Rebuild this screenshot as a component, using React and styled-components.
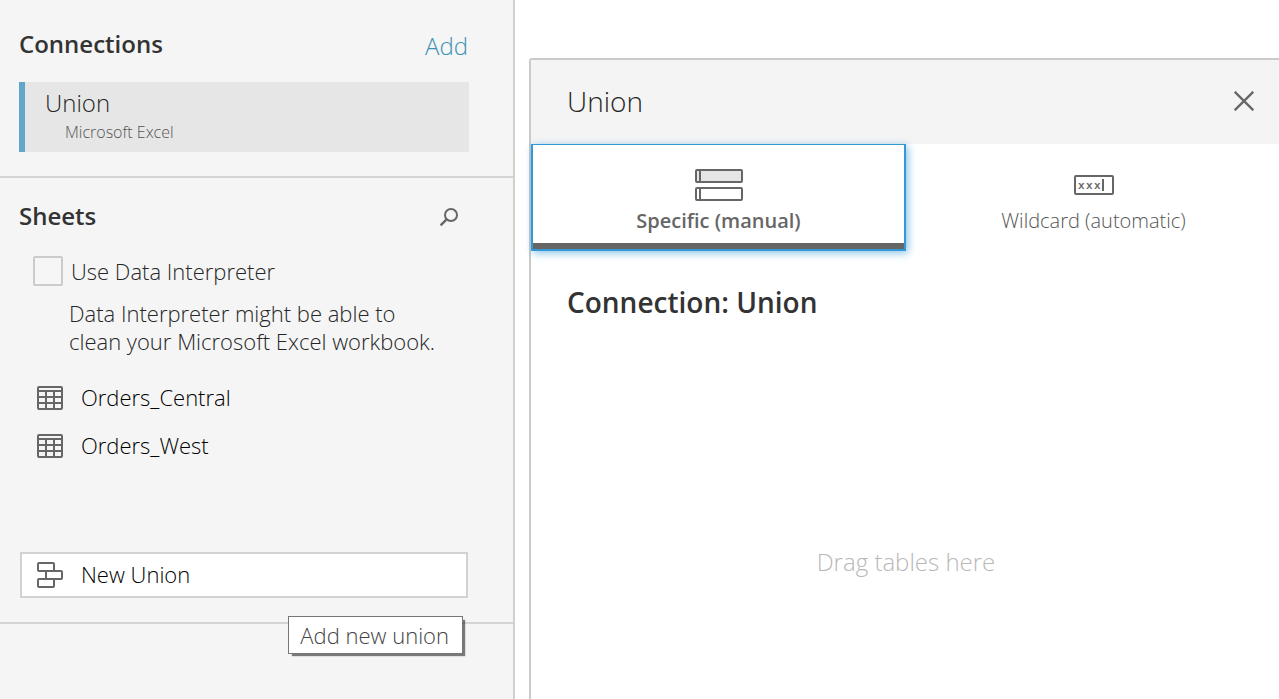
import React from "react";
import styled, { createGlobalStyle } from "styled-components";

const GlobalStyle = createGlobalStyle`
  *, *::before, *::after { box-sizing: border-box; }
  html, body, #root { height: 100%; }
  body {
    margin: 0;
    background: #fff;
    color: #262626;
    font-family: "Open Sans", "Noto Sans", sans-serif;
    font-weight: 300;
  }
  h1, h2, h3, p, ul { margin: 0; padding: 0; }
  button {
    font: inherit;
    color: inherit;
    border: 0;
    padding: 0;
    background: none;
    cursor: pointer;
  }
`;

const Page = styled.div`
  display: flex;
  gap: 14px;
  min-height: 100%;
  overflow-x: hidden;
`;

const Sidebar = styled.aside`
  flex: 0 0 515px;
  background: #f5f5f5;
  border-right: 2px solid #d0d0d0;
`;

const Section = styled.section`
  padding: ${(p) => p.$top}px 44px 24px 19px;
  border-bottom: 2px solid #d4d4d4;
`;

const SectionHeader = styled.div`
  display: flex;
  align-items: center;
  justify-content: space-between;
  height: 32px;
`;

const SectionTitle = styled.h2`
  font-size: 24px;
  line-height: 32px;
  font-weight: 600;
  color: #333;
`;

const AddLink = styled.a`
  font-size: 24px;
  line-height: 32px;
  padding: 4px 1px 0 0;
  color: #3c93b3;
  text-decoration: none;
`;

const SearchButton = styled.button`
  display: flex;
  padding-top: 2px;
  margin-right: 10px;
`;

const ConnectionCard = styled.button`
  && {
    display: block;
    width: 100%;
    height: 70px;
    margin-top: 22px;
    padding: 0 0 4px 20px;
    text-align: left;
    background: #e6e6e6;
    border-left: 6px solid #63a6c9;
  }
`;

const ConnectionName = styled.span`
  display: block;
  font-size: 24px;
  line-height: 34px;
`;

const ConnectionType = styled.span`
  display: block;
  padding-left: 20px;
  font-size: 16px;
  line-height: 24px;
  color: #555;
`;

const InterpreterLabel = styled.label`
  display: flex;
  align-items: center;
  gap: 8px;
  margin: 24px 0 0 14px;
  font-size: 22px;
  line-height: 30px;
`;

const Checkbox = styled.input`
  appearance: none;
  flex: none;
  width: 30px;
  height: 30px;
  margin: 0;
  background: #f6f6f6;
  border: 2px solid #cbcbcb;
  border-radius: 2px;
`;

const Hint = styled.p`
  width: 384px;
  max-width: 100%;
  margin: 13px 0 0 50px;
  font-size: 22px;
  line-height: 28px;
`;

const SheetList = styled.ul`
  margin: 19px 0 82px;
  list-style: none;
`;

const itemLayout = `
  display: flex;
  align-items: center;
  gap: 18px;
  width: 100%;
  font-size: 22px;
  color: #000;
  text-align: left;
`;

const ItemText = styled.span`
  line-height: 30px;
  padding-bottom: 2px;
`;

const SheetButton = styled.button`
  && {
    ${itemLayout}
    height: 48px;
    padding-left: 18px;
  }
`;

const NewUnionArea = styled.div`
  position: relative;
  padding: 0 1px;
`;

const NewUnionButton = styled.button`
  && {
    ${itemLayout}
    height: 46px;
    padding-left: 15px;
    background: #fff;
    border: 2px solid #d2d2d2;
  }
`;

const Tooltip = styled.div`
  position: absolute;
  top: 64px;
  right: 6px;
  height: 38px;
  padding: 0 13px 0 11px;
  font-size: 22px;
  line-height: 36px;
  white-space: nowrap;
  color: #444;
  background: #fff;
  border: 1px solid #767676;
  box-shadow: 3px 3px 1px -1px rgba(0, 0, 0, 0.5);
`;

const Dialog = styled.main`
  flex: 1;
  display: flex;
  flex-direction: column;
  min-width: 0;
  margin: 58px -2px 0 0;
  border: solid #cacaca;
  border-width: 2px 0 0 2px;
  border-top-left-radius: 3px;
`;

const DialogHeader = styled.header`
  display: flex;
  align-items: center;
  justify-content: space-between;
  height: 84px;
  padding: 0 27px 2px 36px;
  background: #f4f4f4;
`;

const DialogTitle = styled.h1`
  font-size: 28px;
  line-height: 36px;
  font-weight: 300;
`;

const CloseButton = styled.button`
  display: flex;
`;

const Tabs = styled.div`
  display: grid;
  grid-template-columns: 1fr 1fr;
`;

const Tab = styled.button`
  && {
    display: flex;
    flex-direction: column;
    align-items: center;
    height: 107px;
    border: 2px solid ${(p) => (p.$selected ? "#3399d6" : "transparent")};
    border-top-width: 1px;
    padding-top: 22px;
    font-size: 20px;
    line-height: 28px;
    font-weight: ${(p) => (p.$selected ? 600 : 300)};
    color: ${(p) => (p.$selected ? "#666" : "#555")};
    background: #fff;
    box-shadow: ${(p) =>
      p.$selected
        ? "inset 0 -6px 0 #666, 2px 2px 8px rgba(51, 153, 214, 0.6)"
        : "none"};
    z-index: ${(p) => (p.$selected ? 1 : 0)};
  }
`;

const TabIcon = styled.span`
  display: flex;
  align-items: center;
  height: 36px;
  margin-bottom: 4px;
`;

const DialogBody = styled.div`
  flex: 1;
  display: flex;
  flex-direction: column;
  padding: 33px 0 0 36px;
`;

const BodyTitle = styled.h3`
  font-size: 28px;
  line-height: 36px;
  font-weight: 600;
  color: #333;
`;

const DropArea = styled.div`
  flex: 1;
  display: flex;
  justify-content: center;
  padding: 226px 36px 0 0;
  font-size: 24px;
  line-height: 32px;
  color: #b8b8b8;
`;

const iconStroke = { fill: "none", stroke: "#666", strokeWidth: 2 };

const SearchIcon = () => (
  <svg width="20" height="20" viewBox="0 0 20 20" {...iconStroke} aria-hidden="true">
    <circle cx="12" cy="8" r="6" />
    <path d="M7.6 12.4 1.6 18.4" strokeWidth="2.4" />
  </svg>
);

const TableIcon = () => (
  <svg width="26" height="24" viewBox="0 0 26 24" {...iconStroke} aria-hidden="true">
    <rect x="1" y="1" width="24" height="22" rx="1" />
    <path d="M1 5H25M1 11H25M1 17H25M9 5V23M17 5V23" />
  </svg>
);

const UnionIcon = () => (
  <svg width="26" height="26" viewBox="0 0 26 26" {...iconStroke} aria-hidden="true">
    <rect x="1" y="1" width="16" height="8" rx="1" />
    <rect x="9" y="9" width="16" height="8" rx="1" />
    <rect x="1" y="17" width="16" height="8" rx="1" />
  </svg>
);

const StackIcon = () => (
  <svg width="48" height="32" viewBox="0 0 48 32" {...iconStroke} aria-hidden="true">
    <rect x="1" y="1" width="46" height="12" rx="1" fill="#e5e5e5" />
    <rect x="1" y="19" width="46" height="12" rx="1" />
    <path d="M5 1V13M5 19V31" />
  </svg>
);

const WildcardIcon = () => (
  <svg width="40" height="20" viewBox="0 0 40 20" {...iconStroke} aria-hidden="true">
    <rect x="1" y="1" width="38" height="18" rx="1" />
    <text
      x="4 12 20"
      y="14"
      fill="#666"
      stroke="none"
      fontFamily="Liberation Mono, monospace"
      fontSize="11"
      fontWeight="700"
    >
      xxx
    </text>
    <path d="M29 4V16" />
  </svg>
);

const CloseIcon = () => (
  <svg width="20" height="20" viewBox="0 0 20 20" {...iconStroke} aria-hidden="true">
    <path d="M0.7 0.7 19.3 19.3M19.3 0.7 0.7 19.3" strokeWidth="2.3" />
  </svg>
);

const sheets = ["Orders_Central", "Orders_West"];

export default function App() {
  return (
    <>
      <GlobalStyle />
      <Page>
        <Sidebar>
          <Section $top={28}>
            <SectionHeader>
              <SectionTitle>Connections</SectionTitle>
              <AddLink href="#add">Add</AddLink>
            </SectionHeader>
            <ConnectionCard type="button">
              <ConnectionName>Union</ConnectionName>
              <ConnectionType>Microsoft Excel</ConnectionType>
            </ConnectionCard>
          </Section>
          <Section $top={22}>
            <SectionHeader>
              <SectionTitle>Sheets</SectionTitle>
              <SearchButton type="button" aria-label="Search sheets">
                <SearchIcon />
              </SearchButton>
            </SectionHeader>
            <InterpreterLabel htmlFor="use-interpreter">
              <Checkbox id="use-interpreter" type="checkbox" />
              Use Data Interpreter
            </InterpreterLabel>
            <Hint>
              Data Interpreter might be able to clean your Microsoft Excel
              workbook.
            </Hint>
            <SheetList>
              {sheets.map((name) => (
                <li key={name}>
                  <SheetButton type="button">
                    <TableIcon />
                    <ItemText>{name}</ItemText>
                  </SheetButton>
                </li>
              ))}
            </SheetList>
            <NewUnionArea>
              <NewUnionButton type="button" aria-describedby="union-tip">
                <UnionIcon />
                <ItemText>New Union</ItemText>
              </NewUnionButton>
              <Tooltip id="union-tip" role="tooltip">
                Add new union
              </Tooltip>
            </NewUnionArea>
          </Section>
        </Sidebar>
        <Dialog>
          <DialogHeader>
            <DialogTitle>Union</DialogTitle>
            <CloseButton type="button" aria-label="Close">
              <CloseIcon />
            </CloseButton>
          </DialogHeader>
          <Tabs role="tablist">
            <Tab type="button" role="tab" aria-selected="true" $selected>
              <TabIcon>
                <StackIcon />
              </TabIcon>
              Specific (manual)
            </Tab>
            <Tab type="button" role="tab" aria-selected="false">
              <TabIcon>
                <WildcardIcon />
              </TabIcon>
              Wildcard (automatic)
            </Tab>
          </Tabs>
          <DialogBody>
            <BodyTitle>Connection: Union</BodyTitle>
            <DropArea>Drag tables here</DropArea>
          </DialogBody>
        </Dialog>
      </Page>
    </>
  );
}
